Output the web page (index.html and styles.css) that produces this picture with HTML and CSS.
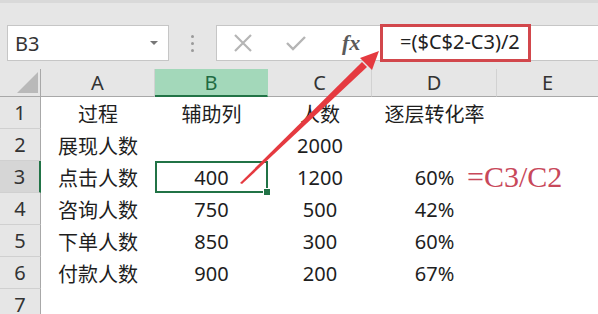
FILE: index.html
```html
<!DOCTYPE html>
<html lang="zh">
<head>
    <meta charset="UTF-8">
    <title>转化率</title>
    <link rel="stylesheet" href="styles.css">
</head>
<body>
    <div class="toolbar">
        <div class="name-box">
            <span>B3</span>
            <span class="caret"></span>
        </div>
        <div class="grip"><i></i><i></i><i></i></div>
        <div class="formula-bar">
            <div class="fx-buttons">
                <svg class="btn" width="20" height="18" viewBox="0 0 20 18">
                    <path d="M2 1 L18 17 M18 1 L2 17" stroke="#b5b5b5" stroke-width="2.2" fill="none"/>
                </svg>
                <svg class="btn" width="22" height="18" viewBox="0 0 22 18">
                    <path d="M2 9 L8 15 L20 3" stroke="#b5b5b5" stroke-width="2.4" fill="none"/>
                </svg>
                <span class="fx">fx</span>
            </div>
            <div class="formula">=($C$2-C3)/2</div>
        </div>
    </div>

    <div class="sheet">
        <div class="corner"><span class="tri"></span></div>
        <div class="col-head">A</div>
        <div class="col-head active">B</div>
        <div class="col-head">C</div>
        <div class="col-head">D</div>
        <div class="col-head last">E</div>

        <div class="row-head">1</div>
        <div class="cell">过程</div>
        <div class="cell">辅助列</div>
        <div class="cell">人数</div>
        <div class="cell">逐层转化率</div>
        <div class="cell"></div>

        <div class="row-head">2</div>
        <div class="cell">展现人数</div>
        <div class="cell"></div>
        <div class="cell">2000</div>
        <div class="cell"></div>
        <div class="cell"></div>

        <div class="row-head active">3</div>
        <div class="cell">点击人数</div>
        <div class="cell selected">400<span class="handle"></span></div>
        <div class="cell">1200</div>
        <div class="cell">60%</div>
        <div class="cell note-cell"><span class="note">=C3/C2</span></div>

        <div class="row-head">4</div>
        <div class="cell">咨询人数</div>
        <div class="cell">750</div>
        <div class="cell">500</div>
        <div class="cell">42%</div>
        <div class="cell"></div>

        <div class="row-head">5</div>
        <div class="cell">下单人数</div>
        <div class="cell">850</div>
        <div class="cell">300</div>
        <div class="cell">60%</div>
        <div class="cell"></div>

        <div class="row-head">6</div>
        <div class="cell">付款人数</div>
        <div class="cell">900</div>
        <div class="cell">200</div>
        <div class="cell">67%</div>
        <div class="cell"></div>

        <div class="row-head">7</div>
        <div class="cell"></div>
        <div class="cell"></div>
        <div class="cell"></div>
        <div class="cell"></div>
        <div class="cell"></div>
    </div>

    <!-- annotation arrow drawn over the sheet -->
    <svg class="arrow" width="598" height="314" viewBox="0 0 598 314">
        <polygon points="240,183 242,184 367,67 362,62" fill="#e53a40"/>
        <polygon points="379,51 372,70 360,58" fill="#e53a40"/>
    </svg>
</body>
</html>
```

FILE: styles.css
```css
body {
    margin: 0;
    background-color: #e6e6e6;
    font-family: 'Noto Sans', 'Noto Sans CJK SC', sans-serif;
    color: #222222;
    width: 598px;
    height: 314px;
    overflow: hidden;
    position: relative;
    border-top: 3px solid #d9d9d9;
    box-sizing: border-box;
}
.toolbar {
    display: flex;
    align-items: center;
    height: 66px;
    padding-top: 14px;
    box-sizing: border-box;
}
.name-box {
    display: flex;
    align-items: center;
    justify-content: space-between;
    margin-left: 7px;
    width: 162px;
    height: 36px;
    padding: 0 10px 0 7px;
    box-sizing: border-box;
    background-color: #ffffff;
    border: 1px solid #c6c6c6;
    font-size: 20px;
    color: #333333;
}
.caret {
    width: 0;
    height: 0;
    border-left: 4px solid transparent;
    border-right: 4px solid transparent;
    border-top: 4px solid #777777;
}
.grip {
    width: 47px;
    display: flex;
    flex-direction: column;
    align-items: center;
    gap: 4px;
}
.grip i {
    width: 3px;
    height: 3px;
    border-radius: 50%;
    background-color: #9a9a9a;
}
.formula-bar {
    flex: 1;
    display: flex;
    align-items: center;
    height: 36px;
    background-color: #ffffff;
    border: 1px solid #c6c6c6;
    border-right: none;
    box-sizing: border-box;
}
.fx-buttons {
    width: 163px;
    display: flex;
    align-items: center;
    padding-left: 16px;
    box-sizing: border-box;
}
.fx-buttons .btn {
    margin-right: 32px;
}
.fx-buttons .btn + .btn {
    margin-right: 35px;
}
.fx {
    font-family: 'Liberation Serif', serif;
    font-style: italic;
    font-weight: bold;
    font-size: 22px;
    color: #5a5a5a;
}
.formula {
    width: 151px;
    height: 38px;
    margin: -1px 0;
    border: 3px solid #d2474c;
    box-sizing: border-box;
    font-size: 20px;
    color: #222222;
    padding-left: 17px;
    line-height: 30px;
}
.sheet {
    display: grid;
    grid-template-columns: 41px 114px 113px 104px 125px 1fr;
    grid-template-rows: 28px repeat(7, 32px);
}
.corner {
    border-right: 1px solid #a8a8a8;
    border-bottom: 1px solid #a8a8a8;
    display: flex;
    align-items: flex-end;
    justify-content: flex-end;
    padding: 0 2px 3px 0;
}
.tri {
    width: 0;
    height: 0;
    border-left: 21px solid transparent;
    border-bottom: 21px solid #b9b9b9;
}
.col-head {
    display: flex;
    align-items: center;
    justify-content: center;
    font-size: 20px;
    color: #333333;
    border-right: 1px solid #d2d2d2;
    border-bottom: 1px solid #a8a8a8;
}
.col-head.last {
    border-right: none;
}
.col-head.active {
    background-color: #a3d8ba;
    color: #1f6b42;
    border-bottom: 2px solid #217346;
    border-right-color: #a3d8ba;
}
.row-head {
    display: flex;
    align-items: center;
    justify-content: center;
    font-size: 20px;
    color: #333333;
    border-right: 1px solid #a8a8a8;
    border-bottom: 1px solid #d0d0d0;
}
.row-head.active {
    background-color: #d6d6d6;
    border-right: 2px solid #217346;
}
.cell {
    display: flex;
    align-items: center;
    justify-content: center;
    background-color: #ffffff;
    font-size: 20px;
    color: #1e1e1e;
    white-space: nowrap;
}
.selected {
    position: relative;
    box-shadow: inset 0 0 0 2px #217346;
}
.handle {
    position: absolute;
    right: -3px;
    bottom: -3px;
    width: 6px;
    height: 6px;
    background-color: #217346;
    border: 1px solid #ffffff;
}
.note-cell {
    justify-content: flex-start;
    overflow: visible;
}
.note {
    margin-left: -30px;
    font-family: 'Liberation Serif', serif;
    font-size: 30px;
    color: #c8485a;
}
.arrow {
    position: absolute;
    left: 0;
    top: -3px;
}
```
